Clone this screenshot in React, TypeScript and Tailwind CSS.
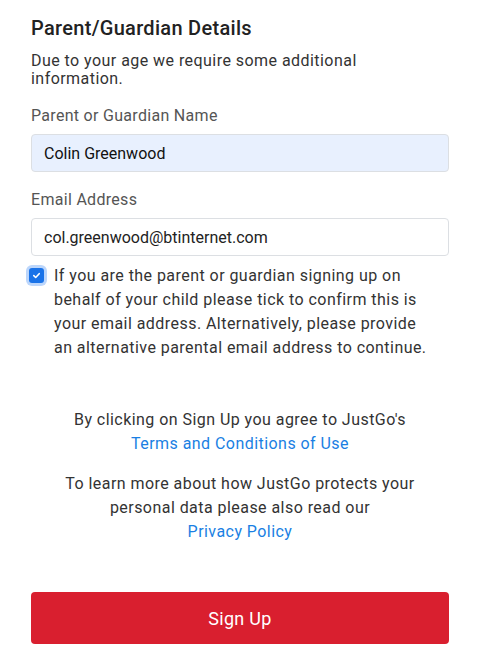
import { useState } from "react";

export default function App() {
  const [checked, setChecked] = useState(true);

  return (
    <div className="min-h-screen bg-white font-['Roboto',sans-serif] text-[#333]">
      <div className="px-[31px] pt-[15px] w-[480px]">
        <h2 className="text-[20px] leading-[26px] font-medium text-[#222] tracking-[0.3px]">
          Parent/Guardian Details
        </h2>
        <p className="mt-[11px] text-[16px] leading-[18px] text-[#333] tracking-[0.45px] pr-[70px]">
          Due to your age we require some additional information.
        </p>

        <label className="block mt-[18px] text-[16px] leading-[20px] text-[#555] tracking-[0.3px]">
          Parent or Guardian Name
        </label>
        <input
          className="mt-[8px] block w-[418px] h-[38px] rounded-[4px] border border-[#dcdfe3] bg-[#e8f0fe] px-[12px] text-[16px] text-[#111] outline-none"
          defaultValue="Colin Greenwood"
        />

        <label className="block mt-[18px] text-[16px] leading-[20px] text-[#555] tracking-[0.3px]">
          Email Address
        </label>
        <input
          className="mt-[8px] block w-[418px] h-[38px] rounded-[4px] border border-[#dcdfe3] bg-white px-[12px] text-[16px] text-[#222] outline-none"
          defaultValue="col.greenwood@btinternet.com"
        />

        <div className="mt-[8px] flex items-start gap-[10px]">
          <button
            onClick={() => setChecked(!checked)}
            className="mt-[4px] ml-[-2px] shrink-0 w-[15px] h-[15px] rounded-[3px] bg-[#1a73e8] ring-[3px] ring-[#bcd6fb] flex items-center justify-center"
          >
            {checked && (
              <svg width="9" height="9" viewBox="0 0 10 10" fill="none">
                <path
                  d="M2 5.2 L4.1 7.2 L8 3"
                  stroke="white"
                  strokeWidth="1.8"
                  strokeLinecap="round"
                  strokeLinejoin="round"
                />
              </svg>
            )}
          </button>
          <p className="pr-[16px] text-[16px] leading-[24px] text-[#333] tracking-[0.45px]">
            If you are the parent or guardian signing up on behalf of your child
            please tick to confirm this is your email address. Alternatively,
            please provide an alternative parental email address to continue.
          </p>
        </div>

        <div className="mt-[48px] text-center text-[16px] leading-[24px] text-[#333] tracking-[0.45px]">
          <p>By clicking on Sign Up you agree to JustGo's</p>
          <a className="text-[#1a7fe3]" href="#">
            Terms and Conditions of Use
          </a>
        </div>

        <div className="mt-[16px] text-center text-[16px] leading-[24px] text-[#333] tracking-[0.45px] px-[20px]">
          <p>
            To learn more about how JustGo protects your personal data please
            also read our
          </p>
          <a className="text-[#1a7fe3]" href="#">
            Privacy Policy
          </a>
        </div>

        <button className="mt-[48px] w-[418px] h-[52px] rounded-[4px] bg-[#d91f2f] text-white text-[18px] tracking-[0.3px]">
          Sign Up
        </button>
      </div>
    </div>
  );
}
